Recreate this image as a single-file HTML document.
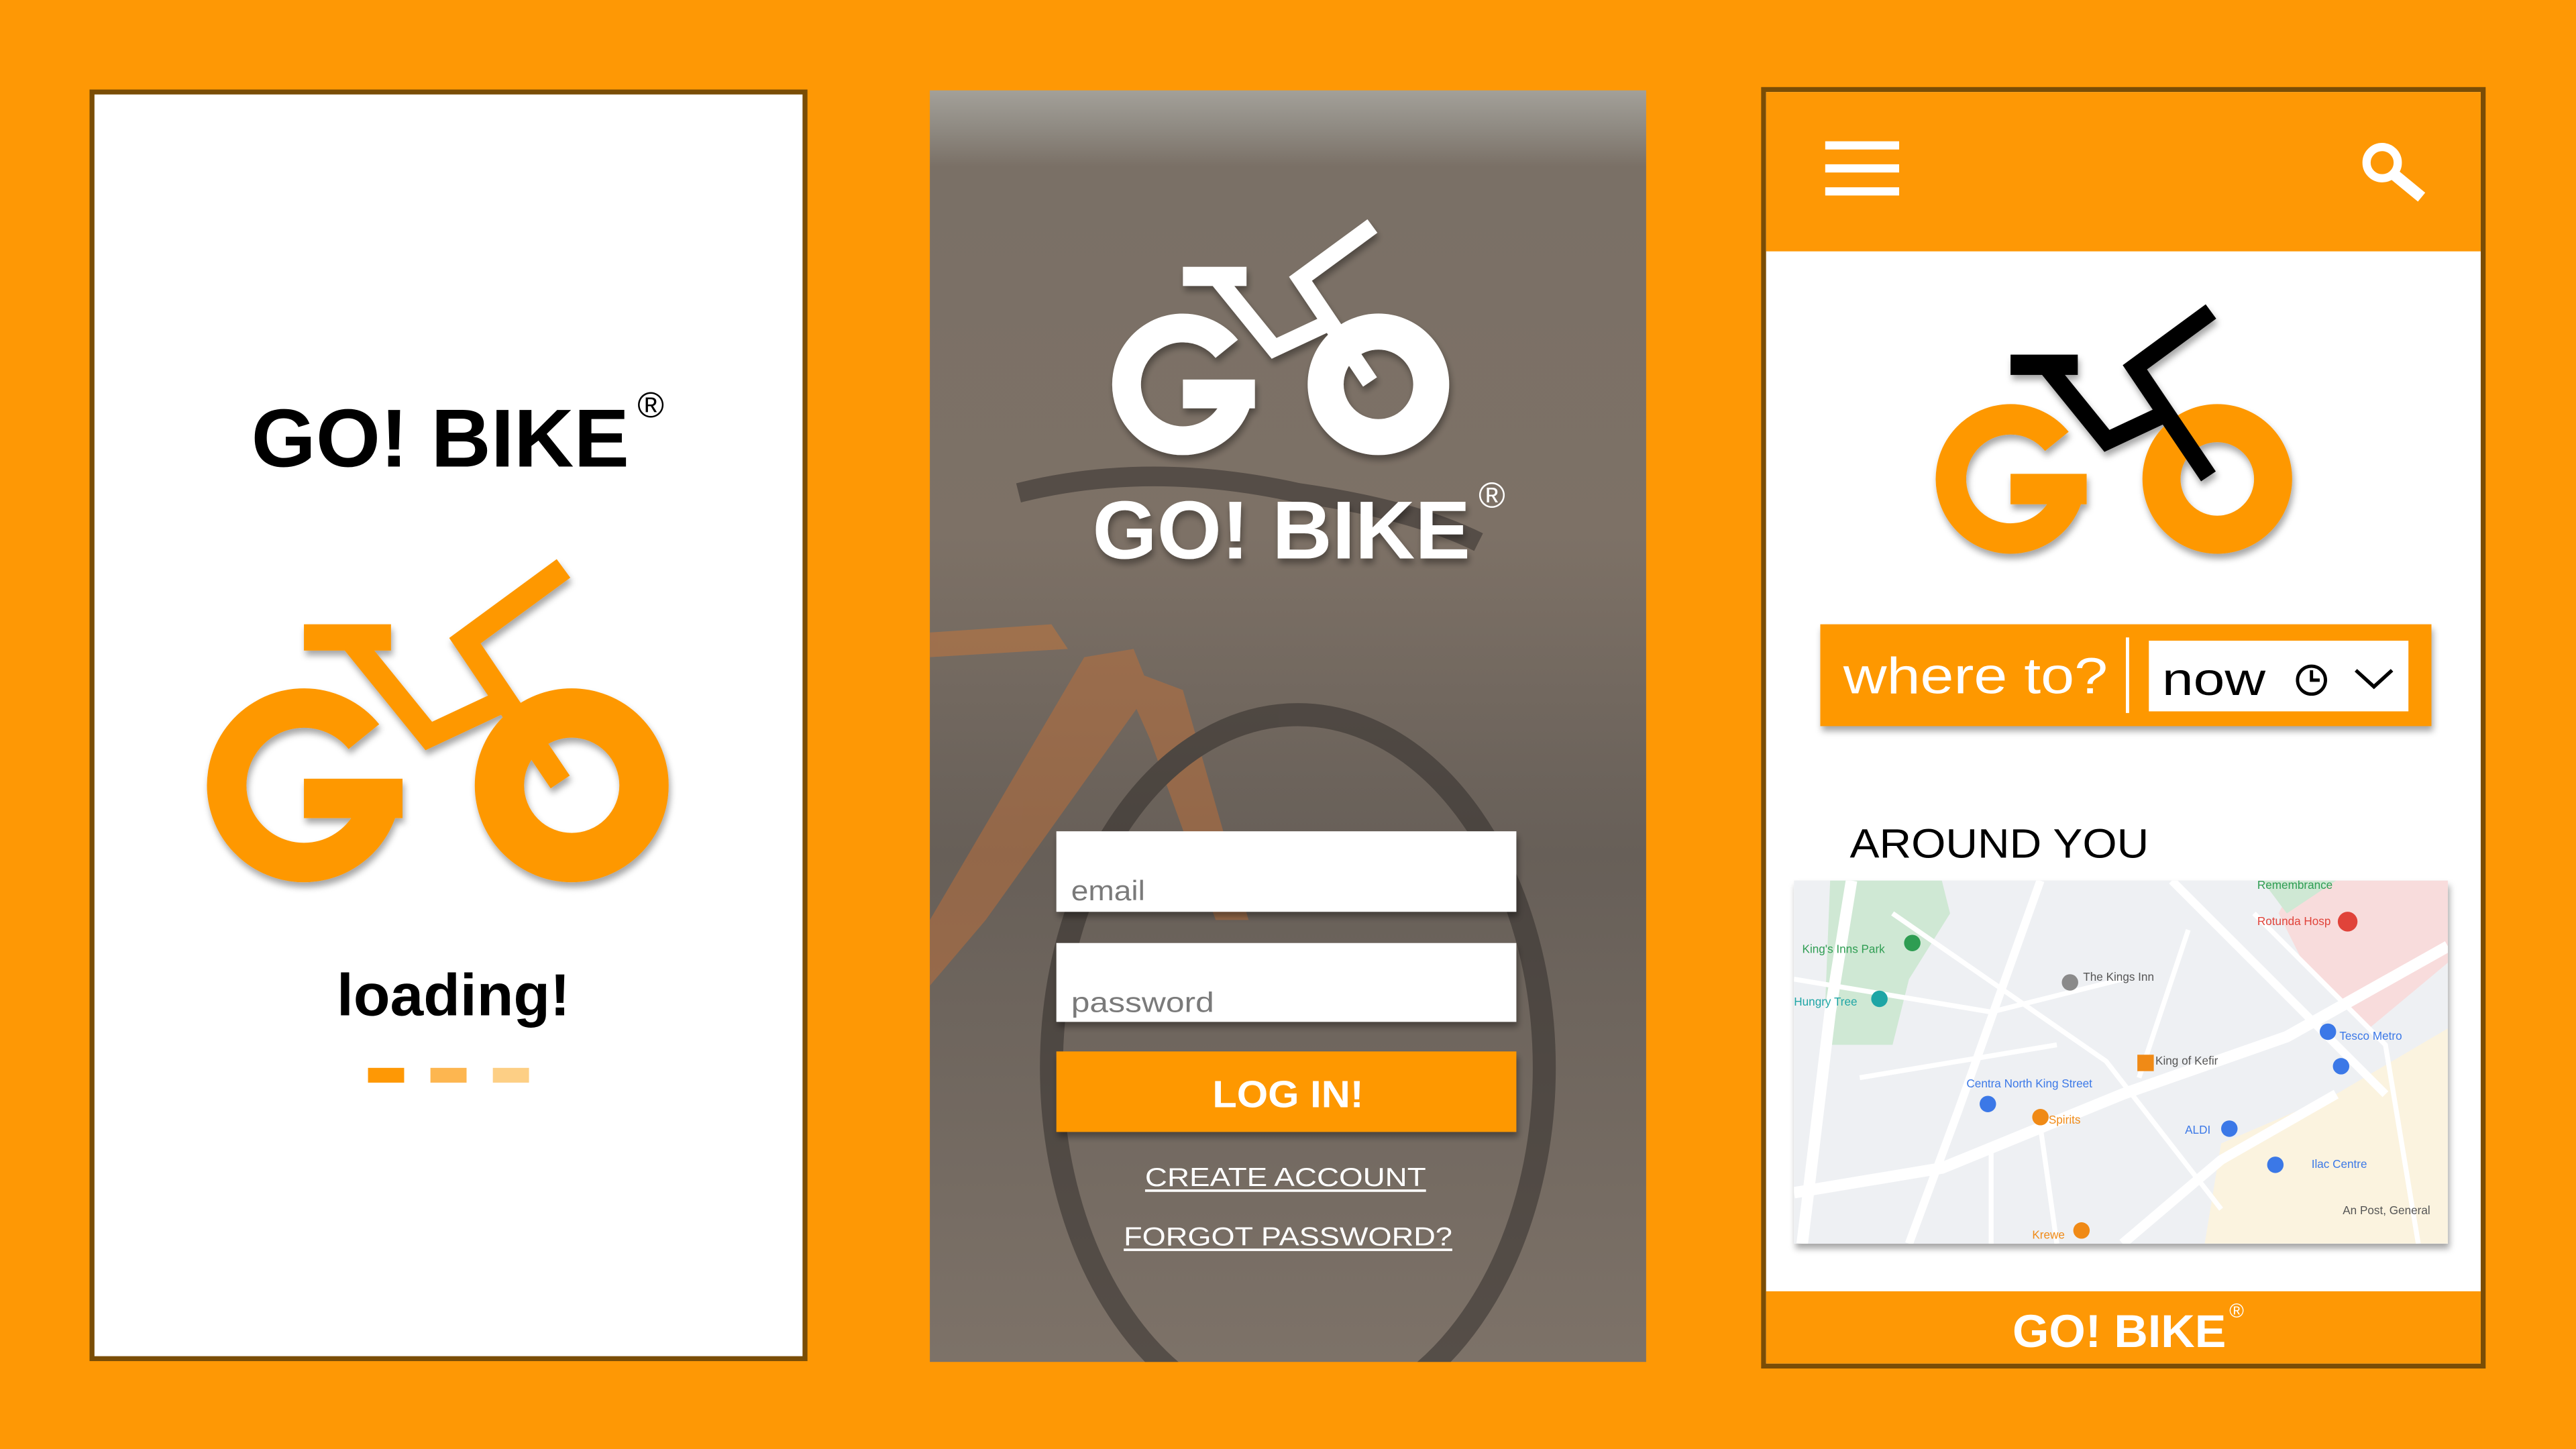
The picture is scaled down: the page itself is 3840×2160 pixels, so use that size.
<!DOCTYPE html>
<html><head><meta charset="utf-8"><style>
html,body{margin:0;padding:0;background:#fe9805;}
svg{display:block}
text{font-family:"Liberation Sans",sans-serif;}
</style></head><body>
<svg width="3840" height="2160" viewBox="0 0 1568 882" xmlns="http://www.w3.org/2000/svg">
<defs>
<g id="wheels">
<path d="M221.5 448.4 A47 47 0 1 0 232 478" fill="none" stroke="currentColor" stroke-width="24"/>
<rect x="185" y="474" width="60" height="24" fill="currentColor"/>
<circle cx="348" cy="478" r="44" fill="none" stroke="currentColor" stroke-width="30"/>
</g>
<g id="frame" fill="none" stroke="currentColor" stroke-width="14" stroke-linejoin="miter">
<rect x="185" y="380" width="53" height="16" fill="currentColor" stroke="none"/>
<path d="M214 390 L261 448 L308 426"/>
<path d="M343 346 L283 390 L341 476"/>
</g>
<filter id="sh" x="-10%" y="-10%" width="120%" height="130%"><feDropShadow dx="1" dy="3" stdDeviation="2" flood-color="#000" flood-opacity="0.35"/></filter>
<linearGradient id="photo" x1="0" y1="0" x2="0" y2="1">
<stop offset="0" stop-color="#a3a099"/>
<stop offset="0.03" stop-color="#8f8a82"/>
<stop offset="0.06" stop-color="#7a7066"/>
<stop offset="0.35" stop-color="#7d7166"/>
<stop offset="0.6" stop-color="#675f58"/>
<stop offset="1" stop-color="#7d7268"/>
</linearGradient>
<clipPath id="p2"><rect x="566" y="55" width="436" height="774"/></clipPath>
</defs>
<rect width="1568" height="882" fill="#fe9805"/>

<!-- Panel 1 -->
<rect x="56" y="56" width="434" height="771" fill="#fff" stroke="#7a4d06" stroke-width="3"/>
<text x="153" y="284" font-size="50" font-weight="bold" textLength="230" lengthAdjust="spacingAndGlyphs" fill="#000">GO! BIKE</text>
<text x="388" y="254" font-size="22" fill="#000">®</text>
<g filter="url(#sh)">
<use href="#wheels" color="#fe9805"/>
<use href="#frame" color="#fe9805"/>
</g>
<text x="205" y="618" font-size="36" font-weight="bold" textLength="142" lengthAdjust="spacingAndGlyphs" fill="#000">loading!</text>
<rect x="224" y="650" width="22" height="9" fill="#fe9805"/>
<rect x="262" y="650" width="22" height="9" fill="#fdb650"/>
<rect x="300" y="650" width="22" height="9" fill="#fdcf85"/>

<!-- Panel 2 -->
<rect x="566" y="55" width="436" height="774" fill="url(#photo)"/>
<g clip-path="url(#p2)" opacity="0.5">
<path d="M566 385 L640 380 L650 395 L566 400Z" fill="#c8773a"/>
<path d="M566 560 L660 400 L690 395 L700 420 L600 560 L566 600Z" fill="#c0703a"/>
<path d="M680 405 L720 420 L760 560 L740 560 L700 450Z" fill="#c0703a"/>
<ellipse cx="790" cy="650" rx="150" ry="215" fill="none" stroke="#2e2a27" stroke-width="14"/>
<path d="M620 300 Q700 280 790 300 Q860 310 900 330" fill="none" stroke="#2e2a27" stroke-width="12"/>
</g>
<g filter="url(#sh)">
<g transform="translate(585,-115) scale(0.73)">
<use href="#wheels" color="#fff"/>
<use href="#frame" color="#fff"/>
</g>
</g>
<text x="665" y="340" font-size="50" font-weight="bold" textLength="230" lengthAdjust="spacingAndGlyphs" fill="#fff" filter="url(#sh)">GO! BIKE</text>
<text x="900" y="309" font-size="22" fill="#fff">®</text>
<rect x="643" y="506" width="280" height="49" fill="#fff" filter="url(#sh)"/>
<text x="652" y="548" font-size="17" textLength="45" lengthAdjust="spacingAndGlyphs" fill="#7a7a7a">email</text>
<rect x="643" y="574" width="280" height="48" fill="#fff" filter="url(#sh)"/>
<text x="652" y="616" font-size="17" textLength="87" lengthAdjust="spacingAndGlyphs" fill="#7a7a7a">password</text>
<rect x="643" y="640" width="280" height="49" fill="#fe9805" filter="url(#sh)"/>
<text x="738" y="674" font-size="23" font-weight="bold" textLength="92" lengthAdjust="spacingAndGlyphs" fill="#fff">LOG IN!</text>
<text x="697" y="722" font-size="16" textLength="171" lengthAdjust="spacingAndGlyphs" fill="#fff">CREATE ACCOUNT</text>
<rect x="697" y="724" width="171" height="1.5" fill="#fff"/>
<text x="684" y="758" font-size="16" textLength="200" lengthAdjust="spacingAndGlyphs" fill="#fff">FORGOT PASSWORD?</text>
<rect x="684" y="760" width="200" height="1.5" fill="#fff"/>

<!-- Panel 3 -->
<rect x="1073.5" y="54.5" width="438" height="777" fill="#fff" stroke="#7a4d06" stroke-width="3"/>
<rect x="1075" y="56" width="435" height="97" fill="#fe9805"/>
<rect x="1111" y="86" width="45" height="5" fill="#fff"/>
<rect x="1111" y="100" width="45" height="5" fill="#fff"/>
<rect x="1111" y="114" width="45" height="5" fill="#fff"/>
<circle cx="1450" cy="99" r="9.5" fill="none" stroke="#fff" stroke-width="5"/>
<path d="M1457 106 L1474 120" stroke="#fff" stroke-width="7"/>
<g filter="url(#sh)">
<g transform="translate(1081,-77.5) scale(0.772)">
<use href="#wheels" color="#fe9805"/>
<use href="#frame" color="#000"/>
</g>
</g>
<rect x="1108" y="380" width="372" height="62" fill="#fe9805" filter="url(#sh)"/>
<text x="1122" y="422" font-size="31" textLength="161" lengthAdjust="spacingAndGlyphs" fill="#fff">where to?</text>
<rect x="1294" y="388" width="2" height="46" fill="#fff"/>
<rect x="1308" y="390" width="158" height="43" fill="#fff"/>
<text x="1316" y="423" font-size="28" textLength="63" lengthAdjust="spacingAndGlyphs" fill="#000">now</text>
<circle cx="1407" cy="414" r="8.5" fill="none" stroke="#000" stroke-width="2"/>
<path d="M1407 408 V414 H1412" fill="none" stroke="#000" stroke-width="2"/>
<path d="M1434 408 L1445 418 L1456 408" fill="none" stroke="#000" stroke-width="2.2"/>
<text x="1126" y="522" font-size="25" textLength="182" lengthAdjust="spacingAndGlyphs" fill="#000">AROUND YOU</text>
<g filter="url(#sh)"><rect x="1092" y="536" width="398" height="221" fill="#eef0f3"/></g>
<svg x="1092" y="536" width="398" height="221" viewBox="0 0 398 221">
<rect width="398" height="221" fill="#eef0f3"/>
<path d="M22 0 L90 0 L95 20 L70 60 L60 100 L18 100 Z" fill="#cfe8d4"/>
<path d="M305 0 L398 0 L398 50 L350 90 L310 50 L295 20Z" fill="#f8dcdc"/>
<path d="M285 0 L330 0 L300 20Z" fill="#cfe8d4"/>
<path d="M260 160 L330 130 L398 90 L398 221 L250 221Z" fill="#fbf3df"/>
<g stroke="#fff" fill="none">
<path d="M35 0 L22 80 L5 221" stroke-width="7"/>
<path d="M0 190 L90 175 L200 130 L300 95 L398 40" stroke-width="7"/>
<path d="M150 0 L100 140 L70 221" stroke-width="5"/>
<path d="M230 0 L290 60 L360 130" stroke-width="5"/>
<path d="M200 221 L260 170 L330 130" stroke-width="6"/>
<path d="M60 20 L190 110 L260 200" stroke-width="3"/>
<path d="M0 60 L120 80 L200 60" stroke-width="3"/>
<path d="M280 20 L360 100 L380 221" stroke-width="3"/>
<path d="M150 150 L160 221 M120 160 L120 221 M40 120 L160 100 M240 30 L210 120" stroke-width="3"/>
</g>
<g font-size="7">
<text x="5" y="44" fill="#2e9d52">King's Inns Park</text>
<text x="0" y="76" fill="#1ea5a5">Hungry Tree</text>
<text x="176" y="61" fill="#555">The Kings Inn</text>
<text x="105" y="126" fill="#3b78e7">Centra North King Street</text>
<text x="220" y="112" fill="#555">King of Kefir</text>
<text x="282" y="27" fill="#e0433a">Rotunda Hosp</text>
<text x="282" y="5" fill="#2e9d52">Remembrance</text>
<text x="332" y="97" fill="#3b78e7">Tesco Metro</text>
<text x="315" y="175" fill="#3b78e7">Ilac Centre</text>
<text x="238" y="154" fill="#3b78e7">ALDI</text>
<text x="155" y="148" fill="#f08a16">Spirits</text>
<text x="145" y="218" fill="#f08a16">Krewe</text>
<text x="334" y="203" fill="#555">An Post, General</text>
</g>
<circle cx="72" cy="38" r="5" fill="#2e9d52"/>
<circle cx="52" cy="72" r="5" fill="#1ea5a5"/>
<circle cx="168" cy="62" r="5" fill="#8a8a8a"/>
<rect x="209" y="106" width="10" height="10" fill="#f08a16"/>
<circle cx="337" cy="25" r="6" fill="#e0433a"/>
<circle cx="325" cy="92" r="5" fill="#3b78e7"/>
<circle cx="333" cy="113" r="5" fill="#3b78e7"/>
<circle cx="265" cy="151" r="5" fill="#3b78e7"/>
<circle cx="293" cy="173" r="5" fill="#3b78e7"/>
<circle cx="118" cy="136" r="5" fill="#3b78e7"/>
<circle cx="150" cy="144" r="5" fill="#f08a16"/>
<circle cx="175" cy="213" r="5" fill="#f08a16"/>
</svg>
<rect x="1075" y="786" width="435" height="44" fill="#fe9805"/>
<text x="1225" y="820" font-size="28" font-weight="bold" textLength="130" lengthAdjust="spacingAndGlyphs" fill="#fff">GO! BIKE</text>
<text x="1357" y="802" font-size="12" fill="#fff">®</text>
</svg>
</body></html>
